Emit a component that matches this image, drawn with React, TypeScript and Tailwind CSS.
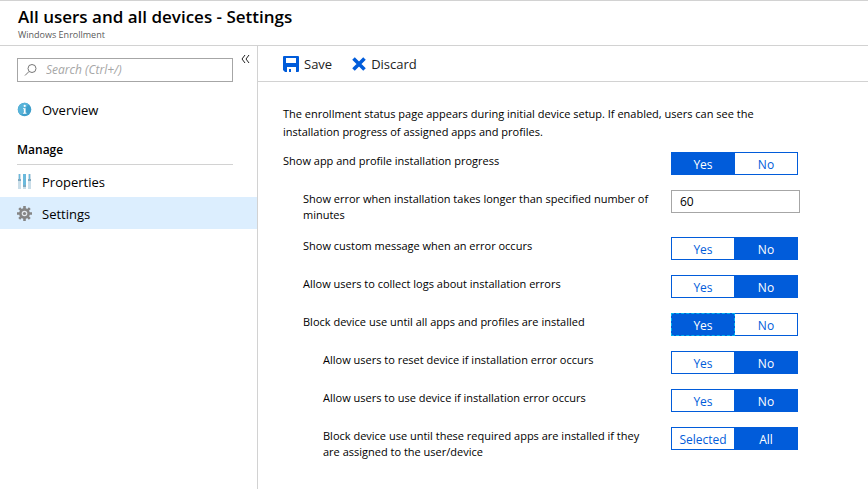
import { useState } from "react";

type Choice = {
  id: string;
  label: string;
  indent: string;
  options: [string, string];
  initial: string;
  focused?: boolean;
};

const YES_NO: [string, string] = ["Yes", "No"];

const PROGRESS: Choice = {
  id: "progress",
  label: "Show app and profile installation progress",
  indent: "",
  options: YES_NO,
  initial: "Yes",
};

const CHOICES: Choice[] = [
  { id: "message", label: "Show custom message when an error occurs", indent: "pl-5", options: YES_NO, initial: "No" },
  { id: "logs", label: "Allow users to collect logs about installation errors", indent: "pl-5", options: YES_NO, initial: "No" },
  { id: "block", label: "Block device use until all apps and profiles are installed", indent: "pl-5", options: YES_NO, initial: "Yes", focused: true },
  { id: "reset", label: "Allow users to reset device if installation error occurs", indent: "pl-10", options: YES_NO, initial: "No" },
  { id: "use", label: "Allow users to use device if installation error occurs", indent: "pl-10", options: YES_NO, initial: "No" },
  { id: "required", label: "Block device use until these required apps are installed if they are assigned to the user/device", indent: "pl-10", options: ["Selected", "All"], initial: "All" },
];

function ToggleRow({ choice }: { choice: Choice }) {
  const [value, setValue] = useState(choice.initial);
  return (
    <div role="radiogroup" aria-labelledby={choice.id} className="flex min-h-6 items-start">
      <span id={choice.id} className={`flex-1 pt-px pr-4 text-[11px] leading-4 ${choice.indent}`}>{choice.label}</span>
      <div className="relative flex w-[129px] shrink-0">
        {choice.options.map((option, i) => {
          const selected = option === value;
          const width = i === 0 ? "w-16" : "w-[63px] border-l-0";
          const fill = selected ? "bg-[#015cda] text-white font-medium" : "bg-white text-[#015cda]";
          const edge = choice.focused && selected ? "border-dashed border-[#00b4f0]" : "border-[#015cda]";
          return (
            <label key={option} className={`flex h-[23px] cursor-pointer items-center justify-center border pt-0.5 ${width} ${fill} ${edge}`}>
              <input
                type="radio"
                className="sr-only"
                name={choice.id + "-value"}
                checked={selected}
                onChange={() => setValue(option)}
              />
              {option}
            </label>
          );
        })}
      </div>
    </div>
  );
}

function InfoIcon() {
  return (
    <svg width="15" height="15" viewBox="0 0 15 15" aria-hidden="true">
      <circle cx="7.5" cy="7.5" r="6.8" fill="#3f9fcb" />
      <path d="M1 7.5A6.6 6.6 0 0 1 11.5 2.2L4 13A6.5 6.5 0 0 1 1 7.5Z" fill="#59b4d9" />
      <circle cx="7.7" cy="3.9" r="1.1" fill="#fff" />
      <path d="M6 6.2h2.6v4.6h.9v1H5.8v-1h1V7.1H6Z" fill="#fff" />
    </svg>
  );
}

function SlidersIcon() {
  return (
    <svg width="15" height="15" viewBox="0 0 15 15" aria-hidden="true">
      <path d="M1 0h3v15H1ZM6 0h3v15H6ZM11 0h3v15h-3Z" fill="#c9dde8" />
      <path d="M2 0h1v5H2ZM6 0h3v11H6ZM12 0h1v5h-1Z" fill="#6bb9dc" />
      <path d="M1 5h3v2H1ZM6 11h3v2H6ZM11 5h3v2h-3Z" fill="#7fa9c0" />
    </svg>
  );
}

function GearIcon() {
  return (
    <svg width="15" height="15" viewBox="0 0 15 15" aria-hidden="true">
      <g stroke="#858585" strokeWidth="2.6">
        <path d="M7.5 0v15M0 7.5h15M2.2 2.2l10.6 10.6M12.8 2.2L2.2 12.8" />
      </g>
      <circle cx="7.5" cy="7.5" r="5.4" fill="#858585" />
      <circle cx="7.5" cy="7.5" r="2.8" fill="#e5eaee" />
      <circle cx="7.5" cy="7.5" r="1.6" fill="#858585" />
    </svg>
  );
}

function SaveIcon() {
  return (
    <svg width="16" height="16" viewBox="0 0 16 16" aria-hidden="true">
      <path fillRule="evenodd" d="M0 1q0-1 1-1h14q1 0 1 1v14q0 1-1 1h-2v-5H4v5H2l-2-2ZM3 2v5h10V2Z" fill="#015cda" />
      <path d="M6 13h2v3H6Z" fill="#015cda" />
    </svg>
  );
}

function DiscardIcon() {
  return (
    <svg width="14" height="14" viewBox="0 0 14 14" aria-hidden="true">
      <path d="M1.5 1.5l11 11M12.5 1.5l-11 11" stroke="#015cda" strokeWidth="3.6" />
    </svg>
  );
}

export default function App() {
  return (
    <div className="flex min-h-screen flex-col bg-white font-['Open_Sans','Noto_Sans',sans-serif] text-xs leading-4 text-black">
      <header className="h-[46px] border-y border-[#d2d2d2] pl-[18px] pt-1">
        <h1 className="text-[17px] leading-6 font-semibold">All users and all devices - Settings</h1>
        <p className="text-[9px] leading-3 text-[#5a5a5a]">Windows Enrollment</p>
      </header>

      <div className="flex flex-1">
        <nav className="w-[258px] shrink-0 border-r border-[#d2d2d2]">
          <div className="flex items-start pt-3 pl-[17px]">
            <label className="flex h-6 w-[216px] items-center border border-[#a6a6a6]">
              <svg className="ml-1.5 shrink-0" width="14" height="14" viewBox="0 0 14 14" fill="none" stroke="#777" aria-hidden="true">
                <circle cx="8" cy="5.5" r="4" />
                <path d="M5 8.5L1 12.5" />
              </svg>
              <input
                type="search"
                aria-label="Search"
                placeholder="Search (Ctrl+/)"
                className="ml-2 w-full min-w-0 bg-transparent italic outline-none placeholder:text-[#a6a6a6]"
              />
            </label>
            <button type="button" aria-label="Collapse menu" className="-mt-1 ml-2">
              <svg width="9" height="10" viewBox="0 0 9 10" fill="none" stroke="#222" aria-hidden="true">
                <path d="M4 1L1 5l3 4M8 1L5 5l3 4" />
              </svg>
            </button>
          </div>
          <a href="#overview" className="mt-[11px] flex h-8 items-center pl-[17px] text-[13px]">
            <InfoIcon />
            <span className="ml-2.5 pt-0.5">Overview</span>
          </a>
          <h2 className="mt-[17px] mr-6 ml-[17px] h-[23px] border-b border-[#d2d2d2] font-semibold">Manage</h2>
          <a href="#properties" className="flex h-8 items-center pl-[17px] text-[13px]">
            <SlidersIcon />
            <span className="ml-2.5 pt-0.5">Properties</span>
          </a>
          <a href="#settings" aria-current="page" className="flex h-8 items-center bg-[#dceefe] pl-[17px] text-[13px]">
            <GearIcon />
            <span className="ml-2.5 pt-0.5">Settings</span>
          </a>
        </nav>

        <main className="min-w-0 flex-1">
          <div className="flex h-9 items-center gap-5 border-b border-[#d2d2d2] pl-[25px] text-[13px] text-[#222]">
            <button type="button" className="flex items-center gap-[5px]">
              <SaveIcon />
              <span>Save</span>
            </button>
            <button type="button" className="flex items-center gap-[5px]">
              <DiscardIcon />
              <span>Discard</span>
            </button>
          </div>

          <form className="max-w-[542px] pt-[23px] pl-[25px]">
            <p className="mb-[11px] text-[11px] leading-[18px]">
              The enrollment status page appears during initial device setup. If enabled, users can see the
              installation progress of assigned apps and profiles.
            </p>
            <div className="flex flex-col gap-3.5">
              <ToggleRow choice={PROGRESS} />
              <div className="flex min-h-6 items-start">
                <label htmlFor="minutes" className="flex-1 pt-px pr-4 pl-5 text-[11px] leading-4">
                  Show error when installation takes longer than specified number of minutes
                </label>
                <input
                  id="minutes"
                  type="text"
                  inputMode="numeric"
                  defaultValue="60"
                  className="h-[23px] w-[129px] shrink-0 border border-[#a6a6a6] px-2 outline-none"
                />
              </div>
              {CHOICES.map((choice) => (
                <ToggleRow key={choice.id} choice={choice} />
              ))}
            </div>
          </form>
        </main>
      </div>
    </div>
  );
}
